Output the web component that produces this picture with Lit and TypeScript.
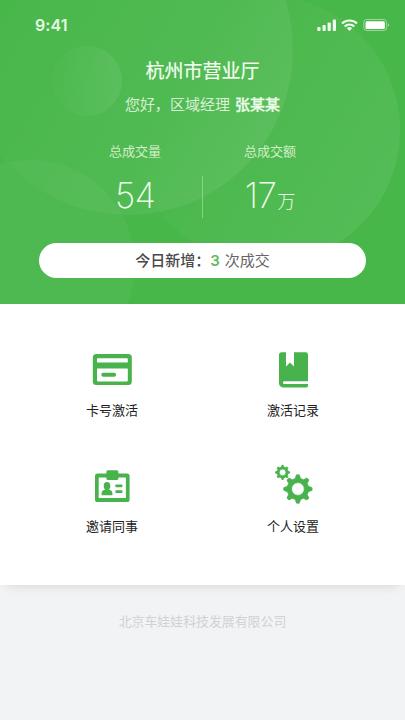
import { LitElement, html, svg, css } from "lit";
import { customElement } from "lit/decorators.js";

// Outline of a toothed wheel around (cx, cy).
function gear(cx: number, cy: number, outer: number, inner: number, hole: number, teeth: number): string {
  const step = (Math.PI * 2) / teeth;
  const pts: string[] = [];
  const at = (r: number, a: number) => pts.push(`${(cx + r * Math.sin(a)).toFixed(2)} ${(cy - r * Math.cos(a)).toFixed(2)}`);
  for (let i = 0; i < teeth; i++) {
    const a = i * step;
    at(inner, a - step * 0.32);
    at(outer, a - step * 0.12);
    at(outer, a + step * 0.12);
    at(inner, a + step * 0.32);
  }
  return `M${pts.join("L")}ZM${cx - hole} ${cy}a${hole} ${hole} 0 1 0 ${hole * 2} 0a${hole} ${hole} 0 1 0 ${-hole * 2} 0Z`;
}

const cardIcon = svg`
  <rect x="2.8" y="4" width="39" height="31" rx="3.5"/>
  <rect class="hole" x="7" y="8.2" width="30.8" height="4.2" rx=".6"/>
  <path class="hole" d="M7 18.6H37.8V30.4a1 1 0 0 1-1 1H8a1 1 0 0 1-1-1Z"/>
  <rect x="11.3" y="22.8" width="14.8" height="3.9" rx="1.9"/>`;

const bookIcon = svg`
  <path d="M10.6 2.2H15V16.4L19 12.6L23 16.4V2.2H34.8a2.2 2.2 0 0 1 2.2 2.2V31.2H13.4a1.4 1.4 0 0 0 0 2.9H37V35.4a2.2 2.2 0 0 1-2.2 2.2H12.4A4.4 4.4 0 0 1 8 33.2V4.8a2.6 2.6 0 0 1 2.6-2.6Z"/>`;

const badgeIcon = svg`
  <rect x="5" y="7.4" width="34.6" height="28.6" rx="2.6"/>
  <rect class="hole" x="8.7" y="11.4" width="27.2" height="20.6" rx=".6"/>
  <rect x="16.4" y="4.2" width="12" height="9.8" rx="1.6"/>
  <ellipse cx="17" cy="20" rx="3.3" ry="3.9"/>
  <path d="M15.5 22h3v1.6c2.4.7 3.9 1.5 3.9 3.6V29.3H11.6V27.2c0-2.1 1.5-2.9 3.9-3.6Z"/>
  <rect x="25.3" y="18.6" width="7.2" height="2.6" rx="1"/>
  <rect x="25.3" y="24.3" width="7.2" height="2.6" rx="1"/>`;

const gearsIcon = svg`
  <path class="gear" d=${gear(11.6, 6.4, 7.1, 5.4, 3.4, 8)}/>
  <path class="gear" d=${gear(26.9, 23, 14.2, 10.8, 6.4, 8)}/>`;

const menu = [
  { label: "卡号激活", icon: cardIcon },
  { label: "激活记录", icon: bookIcon },
  { label: "邀请同事", icon: badgeIcon },
  { label: "个人设置", icon: gearsIcon },
];

@customElement("app-root")
export class AppRoot extends LitElement {
  static styles = css`
    :host {
      display: flex;
      flex-direction: column;
      height: 720px;
      background: #f2f3f5;
      font-family: Inter, "Noto Sans CJK SC", sans-serif;
      overflow: hidden;
    }
    .hero {
      position: relative;
      height: 304px;
      background: #48b74a;
      color: #fff;
      display: flex;
      flex-direction: column;
      align-items: center;
    }
    .decor {
      position: absolute;
      inset: 0;
      width: 100%;
      height: 100%;
    }
    .status {
      position: relative;
      box-sizing: border-box;
      width: 100%;
      height: 50px;
      padding: 0 15px 0 35px;
      display: flex;
      align-items: center;
      justify-content: space-between;
      color: #e6f8e2;
    }
    .time {
      font-size: 16px;
      font-weight: 600;
      letter-spacing: 0.1px;
    }
    .indicators {
      width: 74px;
      height: 20px;
      fill: #effbee;
    }
    .title,
    .greeting,
    .stats,
    .today {
      position: relative;
      white-space: nowrap;
    }
    .title {
      height: 38px;
      line-height: 38px;
      margin-top: 3px;
      font-size: 19px;
      font-weight: 400;
      -webkit-text-stroke: 0.2px currentColor;
      color: #f5fff2;
    }
    .greeting {
      height: 30px;
      line-height: 30px;
      margin-top: -1px;
      font-size: 15px;
      font-weight: 300;
      -webkit-text-stroke: 0.15px currentColor;
      color: #e8f9e4;
      display: flex;
      gap: 5px;
    }
    .greeting b {
      font-weight: 500;
      -webkit-text-stroke: 0.3px currentColor;
      color: #eefdea;
    }
    .stats {
      display: grid;
      grid-template-columns: 135px 135px;
      margin-top: 20px;
      height: 78px;
    }
    .stat {
      display: flex;
      flex-direction: column;
      align-items: center;
      color: #e3f7de;
    }
    .stat-label {
      font-size: 13px;
      line-height: 22px;
      font-weight: 300;
      -webkit-text-stroke: 0.15px currentColor;
    }
    .stat-value {
      display: flex;
      align-items: baseline;
      margin-top: 11px;
      height: 44px;
      line-height: 44px;
      font-size: 35px;
      font-weight: 250;
      letter-spacing: -0.7px;
      color: #effdeb;
    }
    .unit {
      font-size: 18px;
      font-weight: 300;
      letter-spacing: 0;
      margin-left: 1px;
    }
    .rule {
      position: absolute;
      left: 134px;
      top: 36px;
      width: 1px;
      height: 42px;
      background: #8ad288;
    }
    .today {
      width: 327px;
      height: 34.5px;
      margin-top: 25px;
      border-radius: 17.5px;
      background: #fff;
      color: #666;
      display: flex;
      align-items: center;
      justify-content: center;
      font-size: 15px;
      line-height: 34px;
      box-sizing: border-box;
      padding-top: 2px;
    }
    .today b {
      font-weight: 500;
      color: #484848;
    }
    .today .count {
      font-weight: 600;
      color: #5cbc5e;
      margin-right: 5px;
    }
    .menu {
      box-sizing: border-box;
      height: 281px;
      padding: 46px 21.5px 0;
      background: #fff;
      box-shadow: 0 8px 10px -7px rgba(0, 0, 0, 0.12);
      display: grid;
      grid-template-columns: 181px 181px;
      grid-auto-rows: 116px;
    }
    .item {
      display: flex;
      flex-direction: column;
      align-items: center;
      font-size: 13px;
      line-height: 20px;
      color: #222;
    }
    .icon {
      width: 44px;
      height: 40px;
      margin-bottom: 10px;
      fill: #48b34c;
      overflow: visible;
    }
    .icon .hole {
      fill: #fff;
    }
    .gear {
      fill-rule: evenodd;
      stroke: #48b34c;
      stroke-width: 0.8;
      stroke-linejoin: round;
    }
    .footer {
      margin-top: 26px;
      line-height: 22px;
      font-size: 12.9px;
      text-align: center;
      color: #cfd2d4;
    }
  `;

  render() {
    return html`
      <header class="hero">
        <svg class="decor" viewBox="0 0 405 304">
          <defs>
            <linearGradient id="fade" x1="0" y1="0.2" x2="1" y2="0.8">
              <stop offset="0.15" stop-color="#fff" stop-opacity="0"/>
              <stop offset="1" stop-color="#fff" stop-opacity="0.075"/>
            </linearGradient>
            <linearGradient id="glow" x1="0" y1="0" x2="1" y2="0">
              <stop offset="0" stop-color="#fff" stop-opacity="0.01"/>
              <stop offset="1" stop-color="#fff" stop-opacity="0.075"/>
            </linearGradient>
          </defs>
          <circle cx="87" cy="81" r="35" fill="url(#glow)"/>
          <circle cx="128" cy="50" r="165" fill="url(#fade)"/>
          <circle cx="266" cy="130" r="134" fill="url(#fade)"/>
          <circle cx="30" cy="265" r="105" fill="#fff" fill-opacity="0.04"/>
        </svg>
        <div class="status">
          <span class="time">9:41</span>
          <svg class="indicators" viewBox="316 15 74 20">
            <rect x="317.3" y="27" width="3.2" height="4" rx=".8"/>
            <rect x="322.5" y="25" width="3.2" height="6" rx=".8"/>
            <rect x="327.6" y="22.5" width="3.2" height="8.5" rx=".8"/>
            <rect x="332.8" y="19.5" width="3.2" height="11.5" rx=".8"/>
            <g fill="none" stroke="#effbee" stroke-width="2.1">
              <path d="M342 23.5a10.8 10.8 0 0 1 15 0"/>
              <path d="M344.7 26.4a7 7 0 0 1 9.6 0"/>
            </g>
            <path d="M346.9 28.2a3.7 3.7 0 0 1 5.2 0L349.5 31Z"/>
            <rect x="363.8" y="19.5" width="22.8" height="11" rx="3" fill="none" stroke="#effbee" stroke-opacity=".5"/>
            <rect x="365.5" y="21.2" width="19.4" height="7.7" rx="1.5" fill="#fff"/>
            <path d="M388 23.3a2 2 0 0 1 0 3.6Z" opacity=".5"/>
          </svg>
        </div>
        <div class="title">杭州市营业厅</div>
        <div class="greeting"><span>您好，区域经理</span><b>张某某</b></div>
        <div class="stats">
          <div class="stat">
            <span class="stat-label">总成交量</span>
            <span class="stat-value">54</span>
          </div>
          <div class="stat">
            <span class="stat-label">总成交额</span>
            <span class="stat-value">17<span class="unit">万</span></span>
          </div>
          <i class="rule"></i>
        </div>
        <div class="today"><b>今日新增：</b><span class="count">3</span><span>次成交</span></div>
      </header>
      <nav class="menu">
        ${menu.map(
          (m) => html`<div class="item">
            <svg class="icon" viewBox="0 0 44 40">${m.icon}</svg>
            <span>${m.label}</span>
          </div>`
        )}
      </nav>
      <footer class="footer">北京车娃娃科技发展有限公司</footer>
    `;
  }
}
